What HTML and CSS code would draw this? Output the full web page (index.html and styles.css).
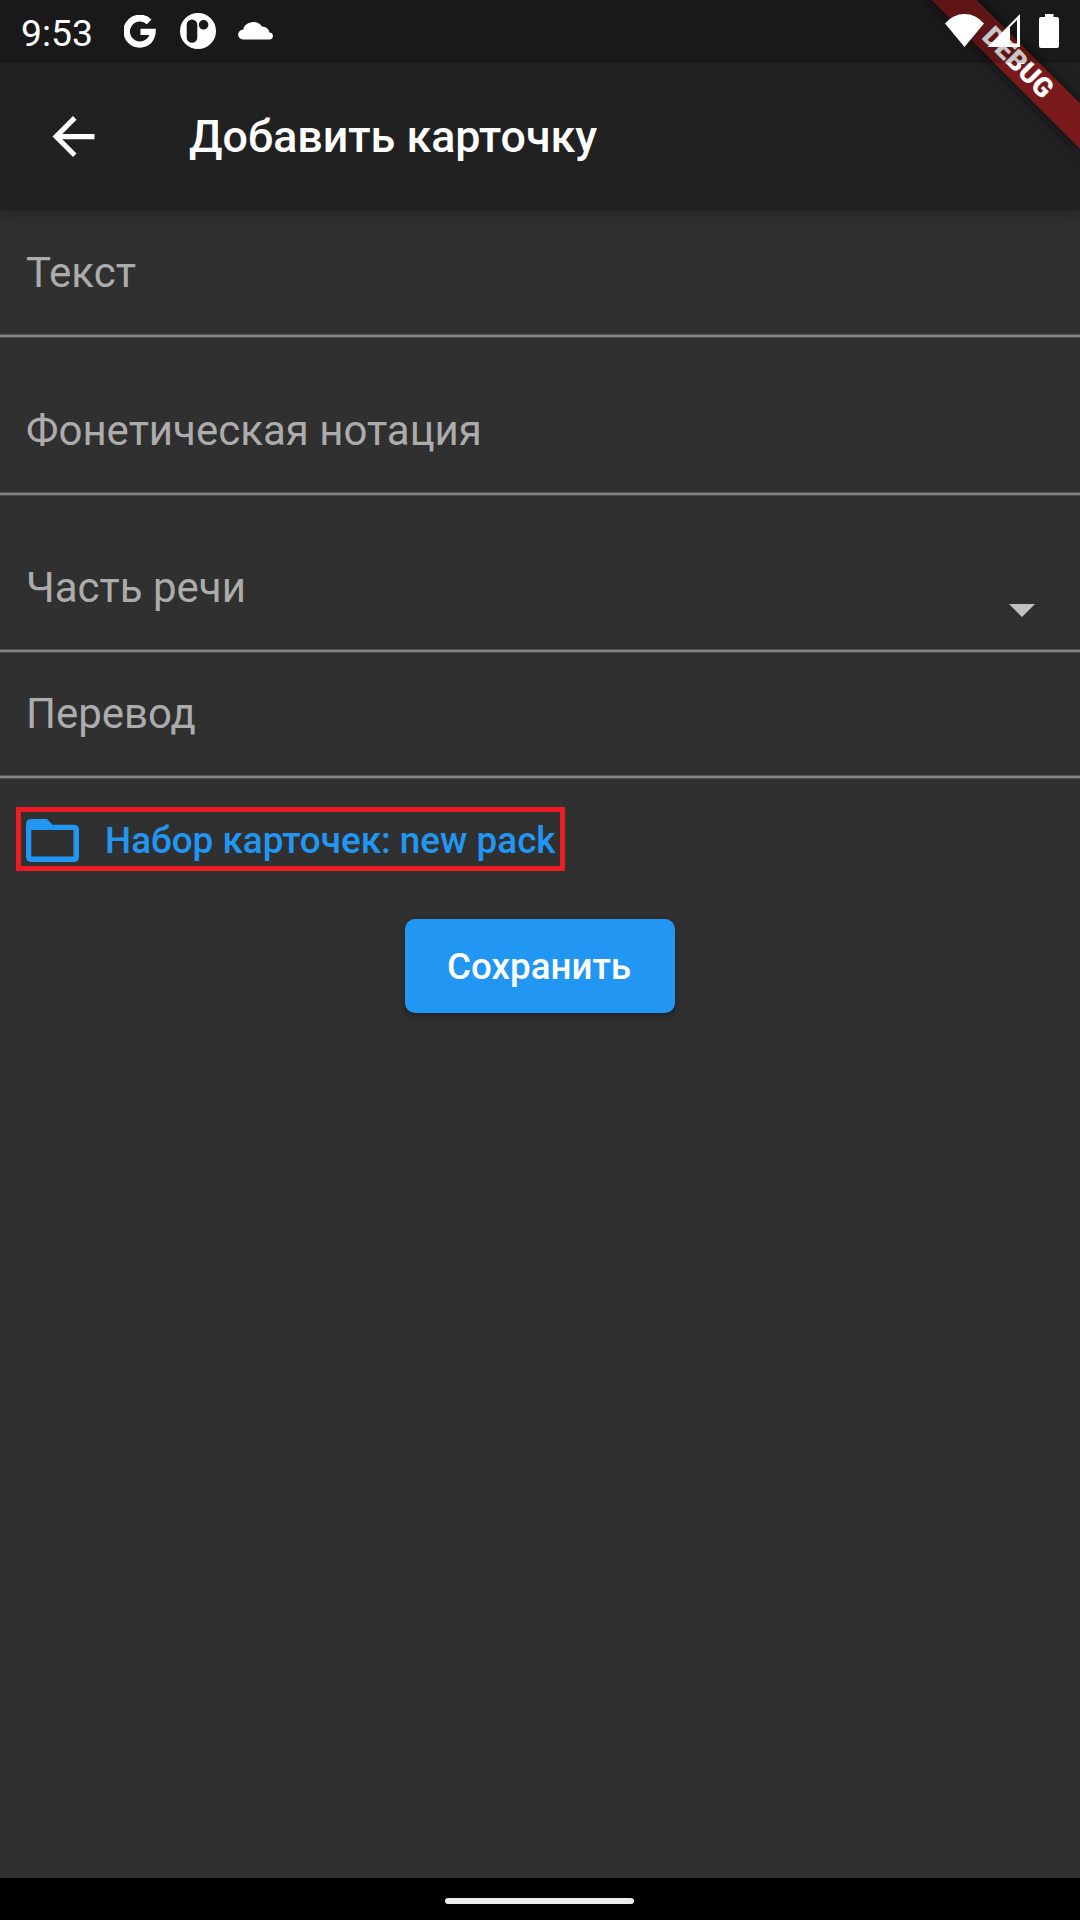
FILE: index.html
```html
<!DOCTYPE html>
<html lang="ru">
<head>
<meta charset="utf-8">
<title>Добавить карточку</title>
<link rel="stylesheet" href="styles.css">
</head>
<body>
<div class="screen">
  <header class="appbar">
    <svg class="back" viewBox="0 0 44 44"><path d="M43.500 18.900H11.300L25.500 4.700 22 1 1.500 21.500 22 42 25.500 38.400 11.300 24.200H43.500z"/></svg>
    <h1 class="title">Добавить карточку</h1>
  </header>
  <main class="form">
    <div class="field"><span class="label">Текст</span></div>
    <div class="field spaced"><span class="label">Фонетическая нотация</span></div>
    <div class="field spaced"><span class="label">Часть речи</span>
      <svg class="caret" viewBox="0 0 26 13"><path d="M0 0h26L13 13z"/></svg>
    </div>
    <div class="field"><span class="label">Перевод</span></div>
    <div class="pack-row">
      <button class="pack">
        <svg class="folder" viewBox="0 0 53 43"><path fill-rule="evenodd" d="M5.500 0H21L26.500 5.700H47.500Q53 5.700 53 11V37.500Q53 43 47.500 43H5.500Q0 43 0 37.500V5.500Q0 0 5.500 0zM5.300 11V37.500H47.500V11z"/></svg>
        <span class="pack-text">Набор карточек: new pack</span>
      </button>
    </div>
    <button class="save"><span>Сохранить</span></button>
  </main>
  <footer class="navbar"><div class="handle"></div></footer>
  <div class="banner-clip"><div class="banner">DEBUG</div></div>
  <div class="status">
    <span class="clock">9:53</span>
    <svg class="google" viewBox="0 0 32 33"><path d="M16.500 13.800H31.800Q32.200 22.500 27.300 28A16.500 16.500 0 1 1 27.500 4.500L22.800 9.200A10 10 0 1 0 25.300 20H16.500z"/></svg>
    <svg class="round-app" viewBox="0 0 36 36"><path fill-rule="evenodd" d="M18 0a18 18 0 1 1 0 36a18 18 0 1 1 0-36zM12 6.500a5.300 5.300 0 0 0-5.300 5.300V24.500a5.300 5.300 0 0 0 10.600 0V11.800A5.300 5.300 0 0 0 12 6.500zM23.600 7a4.800 4.800 0 1 0 0 9.600a4.800 4.800 0 1 0 0-9.600z"/></svg>
    <svg class="cloud" viewBox="0 0 36 20"><path d="M5 19.500A4.900 4.900 0 0 1 5 9.700A10.500 9.700 0 0 1 24 6.500A7.300 7.300 0 0 1 31.500 12.500A3.600 3.600 0 0 1 32.500 19.500z"/></svg>
    <svg class="system" viewBox="0 0 116 36"><path fill-rule="evenodd" d="M1 9.500Q9 0 20.500 0T40 9.500L20.500 33zM76 0V33H43.500zM66 13V29.500H73V6z"/><path d="M101 0h8.500v3H113q2 0 2 2V32q0 2-2 2H97q-2 0-2-2V5q0-2 2-2h4z"/></svg>
  </div>
</div>
</body>
</html>
```
FILE: styles.css
```css
* { box-sizing: border-box; }
body { margin: 0; background: #303030; }
button { border: 0; margin: 0; padding: 0; background: none; font: inherit; }
svg { display: block; flex: none; fill: #fff; }

.screen {
  position: relative;
  display: flex;
  flex-direction: column;
  width: 1080px;
  height: 1920px;
  overflow: hidden;
  background: #303030;
  color: #fff;
  font-family: Roboto, sans-serif;
}

.appbar {
  display: flex;
  align-items: center;
  flex: none;
  height: 210px;
  padding: 63px 0 0 51px;
  background: #212121;
  box-shadow: 0 4px 12px rgba(0, 0, 0, .28);
}
.back { width: 44px; height: 44px; }
.title { margin: 0 0 0 94px; font-size: 44.8px; line-height: 54px; font-weight: 500; white-space: nowrap; }

.form { display: flex; flex-direction: column; flex: 1; }
.field {
  display: flex;
  justify-content: space-between;
  height: 126px;
  flex: none;
  padding: 38px 45px 0 26px;
  position: relative;
}
.field::after {
  content: "";
  position: absolute;
  left: 0;
  right: 0;
  bottom: -2px;
  height: 4px;
  background: linear-gradient(#555 0 1px, #838383 1px 3px, #4b4b4b 3px);
}
.spaced { margin-top: 31.5px; }
.label { font-size: 42px; line-height: 50px; color: #acacac; white-space: nowrap; }
.caret { width: 26px; height: 13px; margin-top: 41px; fill: #c1c1c1; }

.pack-row { padding: 30px 0 0 16px; height: 142px; flex: none; }
.pack {
  display: flex;
  align-items: center;
  width: 549px;
  height: 64px;
  border: 5px solid #ed1c24;
  padding-left: 5px;
  color: #2196f3;
  font-size: 36.85px;
  font-weight: 500;
  white-space: nowrap;
}
.folder { width: 53px; height: 43px; fill: #2196f3; margin-top: 2px; }
.pack-text { margin-left: 26px; padding-top: 3px; line-height: 44px; }
.save {
  align-self: center;
  width: 270px;
  height: 94px;
  padding-right: 2px;
  border-radius: 10px;
  background: #2196f3;
  color: #fff;
  font-size: 36.75px;
  font-weight: 500;
  box-shadow: 0 4px 6px rgba(0, 0, 0, .3);
}

.navbar { display: flex; justify-content: center; flex: none; height: 42px; padding: 20px 2px 0 0; background: #000; }
.handle { width: 189px; height: 6px; border-radius: 3px; background: #ececec; }

.banner-clip { position: absolute; top: 0; right: 0; width: 240px; height: 240px; overflow: hidden; }
.banner {
  position: absolute;
  left: 67px;
  top: 47px;
  width: 220px;
  height: 31.5px;
  padding-left: 1px;
  transform: rotate(45deg);
  background: #7a1a1c;
  box-shadow: 0 0 16px rgba(0, 0, 0, .5);
  text-align: center;
  font-size: 27.3px;
  line-height: 31.5px;
  font-weight: 900;
}

.status {
  position: absolute;
  inset: 0 0 auto 0;
  display: flex;
  align-items: flex-start;
  height: 63px;
  padding: 13px 20px 0 21px;
  background: rgba(0, 0, 0, .22);
}
.clock { width: 103px; font-size: 37.3px; line-height: 40px; }
.google { width: 32px; height: 33px; margin-top: 2px; }
.round-app { width: 36px; height: 36px; margin-left: 24px; }
.cloud { width: 36px; height: 20px; margin: 7px 0 0 22px; }
.system { width: 116px; height: 36px; margin: 1px 0 0 auto; }
```
